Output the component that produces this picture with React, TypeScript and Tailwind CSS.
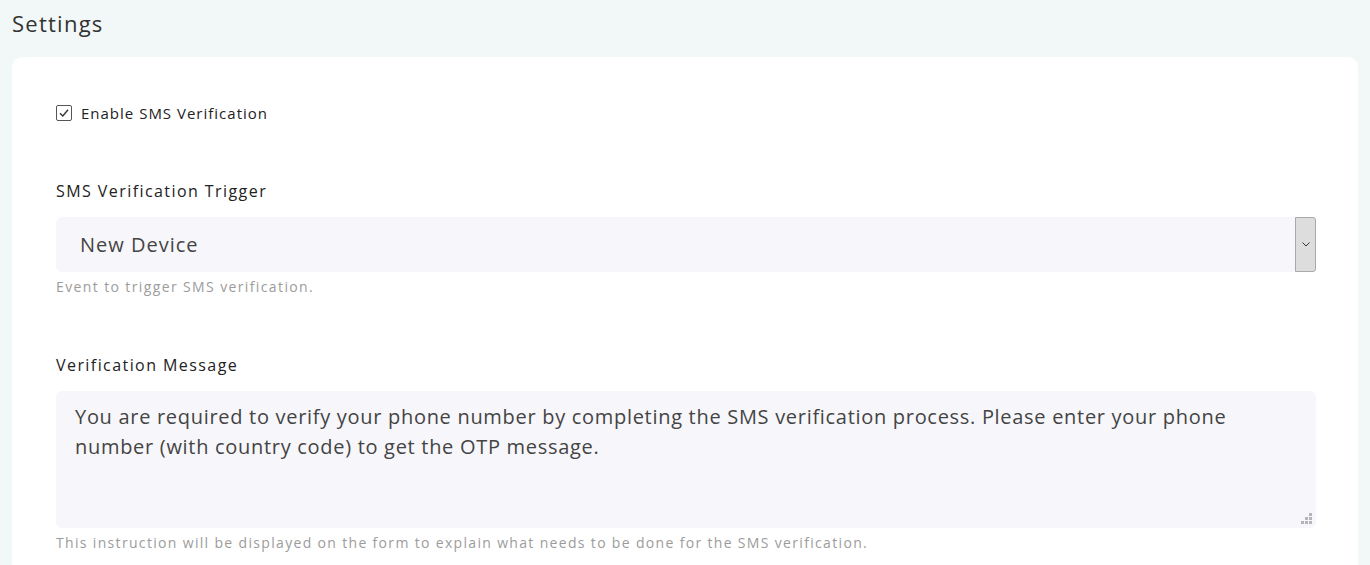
import React from "react";

export default function App() {
  const font = { fontFamily: '"Open Sans", "Liberation Sans", sans-serif' };
  return (
    <div className="min-h-[565px] w-[1370px] bg-[#f2f8f8] text-[#333]" style={font}>
      <div className="px-3 pt-[8px]">
        <h1 className="text-[22px] leading-[30px] text-[#333] tracking-[1.25px]">Settings</h1>
        <div className="mt-[19px] rounded-[10px] bg-white pl-[44px] pr-[42px] pt-[46px] pb-6">
          <label className="flex items-center gap-[9px]">
            <span className="flex h-[16px] w-[16px] items-center justify-center rounded-[2px] border border-[#555] bg-white">
              <svg width="12" height="12" viewBox="0 0 12 12" fill="none">
                <path d="M2 6.2 L4.8 9 L10 2.8" stroke="#333" strokeWidth="1.4" />
              </svg>
            </span>
            <span className="text-[15px] leading-[20px] tracking-[1px] text-[#222]">Enable SMS Verification</span>
          </label>

          <div className="mt-[57px]">
            <div className="text-[16px] leading-[22px] tracking-[1.43px] text-[#222]">SMS Verification Trigger</div>
            <div className="mt-[15px] flex h-[55px]">
              <div className="flex flex-1 items-center rounded-l-[6px] bg-[#f7f7fb] pl-[24px] text-[20px] tracking-[1px] text-[#444]">
                New Device
              </div>
              <div className="flex w-[21px] items-center justify-center rounded-r-[3px] border border-[#a9a9a9] bg-[#dddddd]">
                <svg width="8" height="5" viewBox="0 0 8 5" fill="none">
                  <path d="M0.5 0.5 L4 4 L7.5 0.5" stroke="#333" strokeWidth="1" />
                </svg>
              </div>
            </div>
            <div className="mt-[5px] text-[14px] leading-[20px] tracking-[1.38px] text-[#9c9c9c]">
              Event to trigger SMS verification.
            </div>
          </div>

          <div className="mt-[57px]">
            <div className="text-[16px] leading-[22px] tracking-[1.43px] text-[#222]">Verification Message</div>
            <div className="relative mt-[15px] h-[137px] rounded-[6px] bg-[#f7f7fb] pl-[19px] pr-[60px] pt-[11px] text-[20px] leading-[30px] tracking-[0.7px] text-[#444]">
              You are required to verify your phone number by completing the SMS verification process. Please enter your phone number (with country code) to get the OTP message.
              <svg className="absolute bottom-[3px] right-[3px]" width="12" height="12" viewBox="0 0 12 12">
                <rect x="8" y="0" width="3" height="3" fill="#b5b5b5" />
                <rect x="4" y="4" width="3" height="3" fill="#b5b5b5" />
                <rect x="8" y="4" width="3" height="3" fill="#b5b5b5" />
                <rect x="0" y="8" width="3" height="3" fill="#b5b5b5" />
                <rect x="4" y="8" width="3" height="3" fill="#b5b5b5" />
                <rect x="8" y="8" width="3" height="3" fill="#b5b5b5" />
              </svg>
            </div>
            <div className="mt-[5px] text-[14px] leading-[20px] tracking-[1.33px] text-[#9c9c9c]">
              This instruction will be displayed on the form to explain what needs to be done for the SMS verification.
            </div>
          </div>
        </div>
      </div>
    </div>
  );
}
